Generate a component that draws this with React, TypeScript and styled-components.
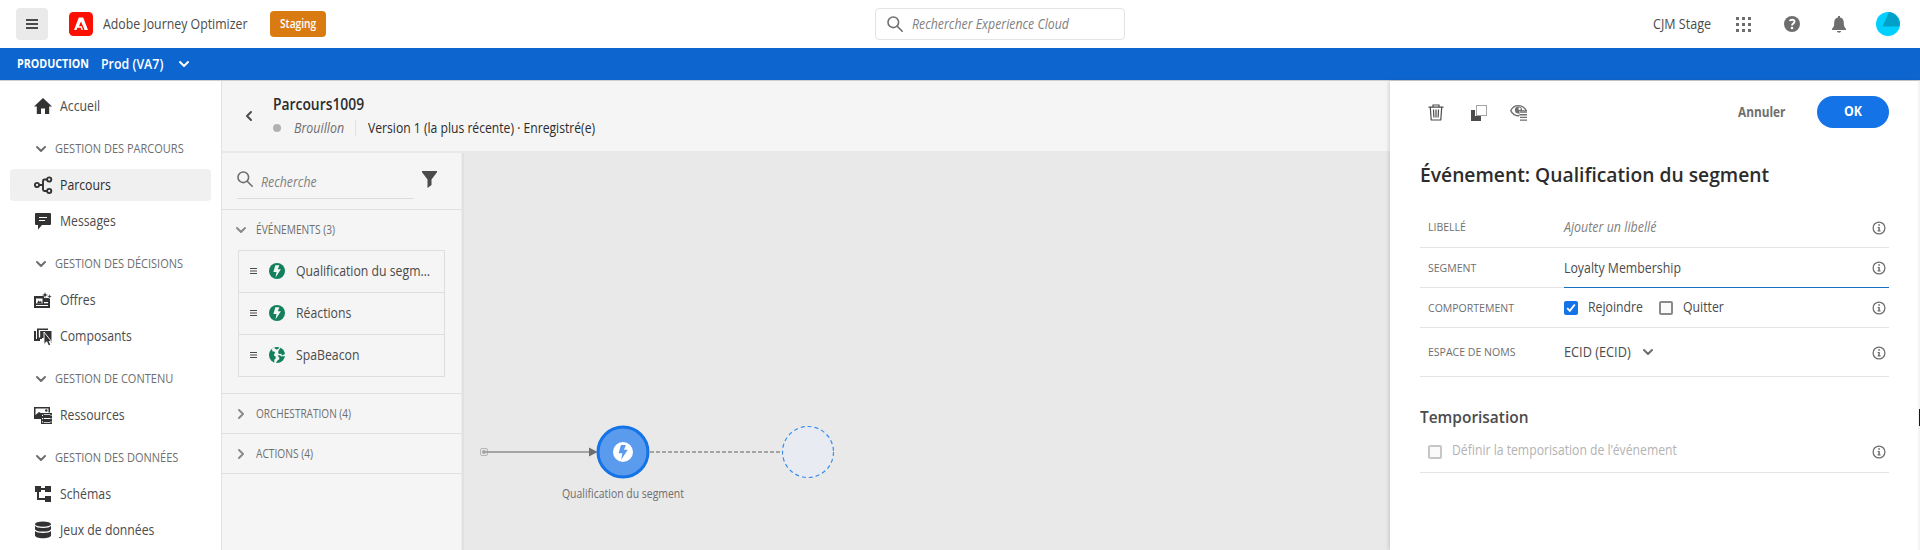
import React from 'react';
import styled, { createGlobalStyle, css } from 'styled-components';

const GlobalStyle = createGlobalStyle`
  *, *::before, *::after { box-sizing: border-box; }
  body { margin: 0; overflow: hidden; background: #fff; }
`;

const Page = styled.div`
  width: 1920px;
  height: 550px;
  display: flex;
  flex-direction: column;
  overflow: hidden;
  font-family: 'Open Sans', 'Noto Sans', sans-serif;
  font-size: 14px;
  line-height: 20px;
  color: #4b4b4b;
`;

/* Text is drawn slightly condensed; $fit is the horizontal ratio and $w the room it takes. */
const Text = styled.span<{ $w?: number; $fit?: number }>`
  display: block;
  flex: none;
  white-space: nowrap;
  width: ${p => (p.$w ? p.$w + 'px' : 'auto')};
  transform: scaleX(${p => p.$fit ?? 0.876});
  transform-origin: left center;
`;

const Svg = styled.svg`
  display: block;
  flex: none;
  overflow: visible;
`;

/* ---------- top bar ---------- */

const TopBar = styled.header`
  height: 48px;
  flex: none;
  display: flex;
  align-items: center;
  padding: 0 20px 0 16px;
  background: #fff;
`;
const MenuButton = styled.button`
  width: 32px;
  height: 32px;
  display: flex;
  align-items: center;
  justify-content: center;
  border: 0;
  padding: 0;
  border-radius: 4px;
  background: #eaeaea;
`;
const Brand = styled.div`
  display: flex;
  align-items: center;
  gap: 10px;
  width: 201px;
  margin-left: 21px;
`;
const StagingBadge = styled.div`
  width: 56px;
  height: 26px;
  padding-left: 10px;
  border-radius: 4px;
  background: #da7b11;
  color: #fff;
  font-size: 12px;
  font-weight: 600;
  line-height: 25px;
`;
const GlobalSearch = styled.div`
  width: 250px;
  height: 32px;
  margin-left: 549px;
  padding-left: 11px;
  display: flex;
  align-items: center;
  gap: 9px;
  border: 1px solid #e4e4e4;
  border-radius: 4px;
  color: #808080;
  font-style: italic;
`;
const TopActions = styled.div`
  flex: 1;
  display: flex;
  align-items: center;
  justify-content: flex-end;
`;
const ActionSlot = styled.div<{ $ml: number }>`
  margin-left: ${p => p.$ml}px;
`;

/* ---------- sandbox bar ---------- */

const SandboxBar = styled.div`
  height: 33px;
  flex: none;
  display: flex;
  align-items: center;
  padding-left: 17px;
  border-bottom: 1px solid #cfcfd3;
  background: #0d66d0;
  color: #fff;
`;
const EnvName = styled.div`
  width: 84px;
  font-size: 12px;
  font-weight: 700;
`;
const SandboxName = styled.div`
  width: 78px;
  font-weight: 600;
`;

/* ---------- navigation ---------- */

const Body = styled.div`
  flex: 1;
  min-height: 0;
  display: flex;
`;
const Nav = styled.nav`
  width: 222px;
  flex: none;
  padding: 9px 10px 0;
  border-right: 1px solid #e1e1e1;
  overflow: hidden;
  background: #fff;
`;
const NavItem = styled.a<{ $active?: boolean }>`
  height: 32px;
  margin-bottom: 4px;
  padding-left: 24px;
  display: flex;
  align-items: center;
  gap: 8px;
  border-radius: 4px;
  ${p => p.$active && css`background: #f0f0f0; color: #2c2c2c;`}
`;
const NavHeading = styled.div`
  height: 32px;
  margin: 11px 0 4px;
  padding-left: 26px;
  display: flex;
  align-items: center;
  gap: 9px;
  font-size: 12px;
  color: #6e6e6e;
`;

/* ---------- journey ---------- */

const Journey = styled.main`
  width: 1168px;
  flex: none;
  display: flex;
  flex-direction: column;
`;
const JourneyHeader = styled.div`
  height: 72px;
  flex: none;
  display: flex;
  padding-left: 22px;
  border-bottom: 2px solid #e9e9e9;
  background: #f5f5f5;
`;
const BackSlot = styled.div`
  width: 29px;
  padding-top: 30px;
`;
const JourneyName = styled.h1`
  margin: 13px 0 3px;
  font-size: 16px;
  font-weight: 600;
  line-height: 21px;
  color: #2c2c2c;
`;
const StatusLine = styled.div`
  display: flex;
  align-items: center;
`;
const StatusDot = styled.i`
  width: 8px;
  height: 8px;
  border-radius: 50%;
  background: #b1b1b1;
`;
const StatusName = styled.em`
  margin-left: 13px;
  width: 62px;
  height: 16px;
  line-height: 16px;
  border-right: 1px solid #e1e1e1;
  color: #6e6e6e;
`;
const VersionName = styled.div`
  margin-left: 12px;
  color: #2c2c2c;
`;
const Workspace = styled.div`
  flex: 1;
  display: flex;
`;

const Palette = styled.aside`
  width: 242px;
  flex: none;
  border-right: 2px solid #e1e1e1;
  box-shadow: inset -1px 0 #ebebeb;
  background: #f5f5f5;
`;
const PaletteSearch = styled.div`
  height: 57px;
  display: flex;
  padding-left: 15px;
  border-bottom: 1px solid #e1e1e1;
`;
const SearchField = styled.div`
  width: 177px;
  height: 46px;
  padding-top: 18px;
  display: flex;
  gap: 8px;
  border-bottom: 1px solid #dcdcdc;
  font-style: italic;
  color: #808080;
`;
const FieldText = styled.div`
  padding-top: 1px;
`;
const FilterSlot = styled.div`
  margin: 18px 0 0 8px;
`;
const Section = styled.section`
  border-bottom: 1px solid #e1e1e1;
`;
const SectionHead = styled.div<{ $h?: number }>`
  height: ${p => p.$h ?? 39}px;
  display: flex;
  align-items: center;
  padding-left: 14px;
  gap: 10px;
  font-size: 12px;
  color: #6e6e6e;
`;
const EventList = styled.ul`
  width: 207px;
  margin: 0 0 16px 16px;
  padding: 0;
  list-style: none;
  border: 1px solid #dedede;
  border-bottom: 0;
`;
const EventItem = styled.li`
  height: 42px;
  display: flex;
  align-items: center;
  padding: 0 0 1px 11px;
  border-bottom: 1px solid #dedede;
`;
const EventIconSlot = styled.div`
  margin: 0 11px 0 12px;
`;

const Canvas = styled.div`
  flex: 1;
  background: #e9e9e9;
`;

/* ---------- properties panel ---------- */

const Properties = styled.aside`
  position: relative;
  flex: 1;
  padding: 15px 29px 0 30px;
  border-right: 2px solid #f4f4f4;
  box-shadow: -1px 0 4px rgba(0, 0, 0, 0.16);
  background: #fff;
`;
const PanelToolbar = styled.div`
  height: 32px;
  display: flex;
  align-items: center;
`;
const ToolSlot = styled.div<{ $ml: number }>`
  margin-left: ${p => p.$ml}px;
`;
const CancelButton = styled.button`
  width: 79px;
  margin-left: auto;
  padding: 0;
  border: 0;
  background: none;
  text-align: left;
  font: 700 14px/20px 'Open Sans', 'Noto Sans', sans-serif;
  color: #6e6e6e;
`;
const OkButton = styled.button`
  width: 72px;
  height: 32px;
  padding: 0 0 2px 27px;
  border: 0;
  border-radius: 16px;
  background: #1473e6;
  text-align: left;
  font: 700 14px/20px 'Open Sans', 'Noto Sans', sans-serif;
  color: #fff;
`;
const PanelTitle = styled.h2`
  margin: 32px 0 17px;
  font-size: 20px;
  font-weight: 600;
  line-height: 30px;
  color: #2c2c2c;
`;
const FormRow = styled.div<{ $h: number }>`
  height: ${p => p.$h}px;
  display: flex;
  align-items: stretch;
  border-bottom: 1px solid #e4e4e4;
`;
const FieldLabel = styled.div`
  width: 144px;
  padding-left: 8px;
  display: flex;
  align-items: center;
  font-size: 11px;
  color: #6e6e6e;
`;
const FieldValue = styled.div<{ $active?: boolean; $muted?: boolean }>`
  flex: 1;
  display: flex;
  align-items: center;
  ${p => p.$muted && css`font-style: italic; color: #808080;`}
  ${p => p.$active && css`margin-bottom: -1px; border-bottom: 1px solid #1473c8;`}
`;
const InfoSlot = styled.div`
  width: 17px;
  margin-left: auto;
  padding-top: 1px;
`;
const Checkbox = styled.span<{ $checked?: boolean; $disabled?: boolean }>`
  width: 14px;
  height: 14px;
  display: flex;
  align-items: center;
  justify-content: center;
  margin-top: 1px;
  border-radius: 2px;
  border: 2px solid ${p => (p.$checked ? '#1473e6' : p.$disabled ? '#c6c6c6' : '#8a8a8a')};
  background: ${p => (p.$checked ? '#1473e6' : '#fafafa')};
`;
const CheckLabel = styled.div<{ $w?: number }>`
  margin-left: 10px;
  width: ${p => (p.$w ? p.$w + 'px' : 'auto')};
  padding-bottom: 2px;
`;
const SubTitle = styled.h3`
  margin: 28px 0 0;
  font-size: 16px;
  font-weight: 600;
  line-height: 24px;
  color: #4b4b4b;
`;
const TimeoutRow = styled.div`
  height: 44px;
  display: flex;
  align-items: center;
  padding: 1px 0 0 8px;
  border-bottom: 1px solid #e4e4e4;
  color: #b3b3b3;
`;
const EdgeHandle = styled.i`
  position: absolute;
  right: -2px;
  top: 328px;
  width: 1px;
  height: 17px;
  background: #17171f;
`;

/* ---------- icons ---------- */

const Chevron = ({ dir = 'down', color = '#6e6e6e' }: { dir?: 'down' | 'right' | 'left'; color?: string }) => {
  const d = { down: 'M1 2 5 6 9 2', right: 'M3 1 7 5 3 9', left: 'M7 1 3 5 7 9' }[dir];
  return (
    <Svg width="10" height={dir === 'down' ? 8 : 10} viewBox={dir === 'down' ? '0 0 10 8' : '0 0 10 10'}>
      <path d={d} fill="none" stroke={color} strokeWidth="2" strokeLinecap="round" strokeLinejoin="round" />
    </Svg>
  );
};

const SearchIcon = () => (
  <Svg width="16" height="16" viewBox="0 0 16 16" fill="none" stroke="#6e6e6e" strokeWidth="1.6" strokeLinecap="round">
    <circle cx="6.3" cy="6.3" r="5.3" />
    <path d="m10.2 10.2 5 5" />
  </Svg>
);

const AdobeLogo = () => (
  <Svg width="24" height="24" viewBox="0 0 24 24">
    <rect width="24" height="24" rx="4.5" fill="#fa0f00" />
    <path d="M9.8 5.600h4.400L19 18h-3.400L12 9.400l-2 4.900h2.700l1.300 3.700H5z" fill="#fff" />
    <path d="M8.400 15.800h3.300l.8 2.200h-5z" fill="#fa0f00" />
  </Svg>
);

const bolt = 'M7.3 3.2h4.1l-1.6 4h3.1L7.5 15.4l1-5.3H5.4z';

const BoltBadge = () => (
  <Svg width="16" height="16" viewBox="1 1 16 16">
    <circle cx="9" cy="9" r="8" fill="#12805c" />
    <path d={bolt} fill="#f5f5f5" />
  </Svg>
);

const GlobeIcon = () => (
  <Svg width="16" height="16" viewBox="0 0 16 16">
    <circle cx="8" cy="8" r="8" fill="#12805c" />
    <path
      d="M2.600 2 5.300.2 6 1.800 7.500 2.400 9.500 1.800 10.300 0 11.600.6 10 3 9 5.200 10 7 12.300 6.800 13 8.400 16 7 16 9 12.600 9.400 10.800 8.200 8.400 8.400 10.200 10.400 10.300 12.200 8.400 13.400 7 16 5.300 16 5.300 12.800 6.800 11.200 6.600 9.600 5 8.400 5.100 7 6.300 5.900 5.300 4.600 3.800 4.400z"
      fill="#f5f5f5"
    />
  </Svg>
);

const DragHandle = () => (
  <Svg width="7" height="6" viewBox="0 0 7 6">
    <path d="M0 .5h7M0 3h7M0 5.5h7" stroke="#4b4b4b" strokeWidth="1" />
  </Svg>
);

const InfoIcon = () => (
  <Svg width="14" height="14" viewBox="0 0 14 14">
    <circle cx="7" cy="7" r="5.9" fill="none" stroke="#6e6e6e" strokeWidth="1.3" />
    <path d="M6.2 3.3h1.700v1.500H6.200zM5.600 6h2.200v3.300h.8v1.100H5.600V9.300h.7V7.100h-.7z" fill="#6e6e6e" />
  </Svg>
);

const navIcons: Record<string, React.ReactNode> = {
  home: <path d="M9 1 0 9.6h2.8V17H7v-5.600h4V17h4.200V9.600H18z" />,
  journeys: (
    <g fill="none" stroke="#323232" strokeWidth="1.900">
      <circle cx="3" cy="9" r="2.100" />
      <circle cx="15.200" cy="3.500" r="2.100" />
      <circle cx="15.200" cy="15" r="2.100" />
      <path d="M5 9h4M13 3.500h-2.500Q9 3.500 9 5v8.500Q9 15 10.500 15H13" />
    </g>
  ),
  messages: (
    <>
      <path d="M2 1h14a1 1 0 0 1 1 1v10a1 1 0 0 1-1 1H8l-4 4.500V13H2a1 1 0 0 1-1-1V2a1 1 0 0 1 1-1z" />
      <path d="M5 5.500h8M5 8.500h6" stroke="#fff" strokeWidth="1.100" />
    </>
  ),
  offers: (
    <>
      <path d="M0 5h10v2h6v10H0z" />
      <path d="M2 7.500h6.500v5H2zM2 14h12v1H2zM10 11h4v1.200h-4z" fill="#fff" />
      <path d="m2.800 12.500 1.800-3 1.400 1.500 1-1.500 1 3z" />
      <path d="m11 .8.9 2.300 2.300.9-2.300.9L11 7.200l-.9-2.300L7.800 4l2.300-.9zM15.500 3l.7 1.800 1.800.7-1.800.7-.7 1.800-.7-1.800-1.800-.7 1.800-.7z" stroke="#fff" strokeWidth=".4" />
    </>
  ),
  components: (
    <>
      <path d="M0 4h2v8h4v2H0zM3 1.500h11V3H4.800v7.500H8V12H3z" />
      <path d="M6.200 4H17.500v12L15 13H10v-2H6.200z" />
      <path d="M10 5v12.500l2.800-2.900h4.800z" stroke="#fff" strokeWidth=".9" />
      <path d="m13.500 13.500 2 4.500" stroke="#323232" strokeWidth="1.600" />
    </>
  ),
  assets: (
    <>
      <path d="M0 1h16v5.500h-1.500v-4h-13V9L5 6l2.500 1.500V13H0z" />
      <circle cx="12.300" cy="4.500" r="1.200" />
      <path d="M7 7h11v11H7z" />
      <path d="M9.800 12h6.400v1.100H9.800zM9.800 8.200h6.400v.8H9.800zM9.800 16.200h6.400v.8H9.800z" fill="#fff" />
      <path d="M8 9.300h1M8 12.600h1M8 15.900h1M16.600 9.300h.9M16.600 12.600h.9M16.600 15.900h.9" stroke="#fff" strokeWidth="1.200" />
    </>
  ),
  schemas: (
    <>
      <path d="M1 1h6v6H1zM11 1h6v6h-6zM11 11h6v6h-6z" />
      <path d="M6 4h6M4 6v8h8" fill="none" stroke="#323232" strokeWidth="2" />
    </>
  ),
  datasets: (
    <>
      <ellipse cx="9" cy="3.200" rx="8" ry="2.600" />
      <path d="M1 4.800C2 6.500 5 7 9 7s7-.5 8-2.200v3.100c0 1.500-3.600 2.700-8 2.700S1 9.400 1 7.900z" />
      <path d="M1 10.100c1 1.300 4 1.800 8 1.800s7-.5 8-1.800v4.300c0 1.600-3.600 2.800-8 2.800s-8-1.200-8-2.800z" />
    </>
  ),
};

const NavIcon = ({ name }: { name: string }) => (
  <Svg width="18" height="18" viewBox="0 0 18 18" fill="#323232">{navIcons[name]}</Svg>
);

/* ---------- data ---------- */

const home = { icon: 'home', label: 'Accueil' };
const navGroups = [
  { title: 'GESTION DES PARCOURS', items: [{ icon: 'journeys', label: 'Parcours', active: true }, { icon: 'messages', label: 'Messages' }] },
  { title: 'GESTION DES DÉCISIONS', items: [{ icon: 'offers', label: 'Offres' }, { icon: 'components', label: 'Composants' }] },
  { title: 'GESTION DE CONTENU', items: [{ icon: 'assets', label: 'Ressources' }] },
  { title: 'GESTION DES DONNÉES', items: [{ icon: 'schemas', label: 'Schémas' }, { icon: 'datasets', label: 'Jeux de données' }] },
];
const events = [
  { label: 'Qualification du segm…', icon: <BoltBadge /> },
  { label: 'Réactions', icon: <BoltBadge /> },
  { label: 'SpaBeacon', icon: <GlobeIcon /> },
];

/* ---------- parts ---------- */

const Diagram = () => (
  <Svg width="926" height="397" viewBox="464 153 926 397">
    <rect x="480.500" y="448.500" width="7" height="7" rx="1.500" fill="none" stroke="#b5b5b5" />
    <circle cx="484" cy="452" r="2" fill="#a5a5a5" />
    <path d="M485 452H590" stroke="#a5a5a5" strokeWidth="2" />
    <path d="M589 447.500 597.500 452 589 456.500z" fill="#6e6e6e" />
    <circle cx="623" cy="452" r="25" fill="#5b9bed" stroke="#1473e6" strokeWidth="3" />
    <g transform="translate(612 441) scale(1.222)">
      <circle cx="9" cy="9" r="8.200" fill="#fff" />
      <path d={bolt} fill="#5b9bed" />
    </g>
    <path d="M650 452H782" stroke="#a5a5a5" strokeWidth="2" strokeDasharray="4 2" />
    <circle cx="808" cy="452" r="25.500" fill="#e8ecf2" stroke="#378ef0" strokeWidth="1.200" strokeDasharray="4 3" />
    <text x="562" y="498" fontSize="12" fill="#6e6e6e" textLength="122" lengthAdjust="spacingAndGlyphs">Qualification du segment</text>
  </Svg>
);

const Info = () => <InfoSlot><InfoIcon /></InfoSlot>;

export default function App() {
  return (
    <Page>
      <GlobalStyle />
      <TopBar>
        <MenuButton>
          <Svg width="12" height="10" viewBox="0 0 12 10"><path d="M0 1h12M0 5h12M0 9h12" stroke="#4b4b4b" strokeWidth="2" /></Svg>
        </MenuButton>
        <Brand><AdobeLogo /><Text $fit={0.88}>Adobe Journey Optimizer</Text></Brand>
        <StagingBadge><Text $fit={0.85}>Staging</Text></StagingBadge>
        <GlobalSearch><SearchIcon /><Text $fit={0.88}>Rechercher Experience Cloud</Text></GlobalSearch>
        <TopActions>
          <Text $w={58} $fit={0.896}>CJM Stage</Text>
          <ActionSlot $ml={25}>
            <Svg width="15" height="15" viewBox="0 0 15 15" fill="#6e6e6e">
              {[0, 6, 12].map(y => [0, 6, 12].map(x => <rect key={`${x}-${y}`} x={x} y={y} width="3" height="3" />))}
            </Svg>
          </ActionSlot>
          <ActionSlot $ml={33}>
            <Svg width="16" height="16" viewBox="0 0 16 16">
              <circle cx="8" cy="8" r="8" fill="#6e6e6e" />
              <path d="M5.800 5C6.200 3.500 10.500 3 10.500 5.600 10.500 7.600 8 7.400 8 9.600" fill="none" stroke="#fff" strokeWidth="1.900" />
              <circle cx="8" cy="12" r="1.300" fill="#fff" />
            </Svg>
          </ActionSlot>
          <ActionSlot $ml={32}>
            <Svg width="14" height="17" viewBox="0 0 14 17" fill="#6e6e6e">
              <path d="M6 0h2v1.500c2.600.5 3.800 2.300 3.800 5 0 3.800.7 5.100 2.200 6.300V14H0v-1.200c1.500-1.200 2.200-2.500 2.200-6.300 0-2.700 1.200-4.500 3.800-5zM5 15h4c0 2.300-4 2.300-4 0z" />
            </Svg>
          </ActionSlot>
          <ActionSlot $ml={30}>
            <Svg width="24" height="24" viewBox="0 0 24 24">
              <circle cx="12" cy="12" r="12" fill="#00d0ff" />
              <path d="M13 .1A12 12 0 0 1 23.600 14.500L6.500 14.500z" fill="#00a0c8" />
            </Svg>
          </ActionSlot>
        </TopActions>
      </TopBar>

      <SandboxBar>
        <EnvName><Text $fit={0.891}>PRODUCTION</Text></EnvName>
        <SandboxName><Text $fit={0.885}>Prod (VA7)</Text></SandboxName>
        <Chevron color="#fff" />
      </SandboxBar>

      <Body>
        <Nav>
          <NavItem><NavIcon name={home.icon} /><Text>{home.label}</Text></NavItem>
          {navGroups.map(g => (
            <React.Fragment key={g.title}>
              <NavHeading><Chevron /><Text $fit={0.917}>{g.title}</Text></NavHeading>
              {g.items.map(i => (
                <NavItem key={i.label} $active={'active' in i && i.active}>
                  <NavIcon name={i.icon} /><Text>{i.label}</Text>
                </NavItem>
              ))}
            </React.Fragment>
          ))}
        </Nav>

        <Journey>
          <JourneyHeader>
            <BackSlot><Chevron dir="left" color="#4b4b4b" /></BackSlot>
            <div>
              <JourneyName><Text $fit={0.866}>Parcours1009</Text></JourneyName>
              <StatusLine>
                <StatusDot />
                <StatusName><Text $w={50} $fit={0.887}>Brouillon</Text></StatusName>
                <VersionName><Text $fit={0.868}>Version 1 (la plus récente) · Enregistré(e)</Text></VersionName>
              </StatusLine>
            </div>
          </JourneyHeader>
          <Workspace>
            <Palette>
              <PaletteSearch>
                <SearchField><SearchIcon /><FieldText><Text $fit={0.88}>Recherche</Text></FieldText></SearchField>
                <FilterSlot>
                  <Svg width="16" height="17" viewBox="0 0 16 17"><path d="M0 0h15v1.200L9.500 8.500V14l-4 3V8.500L0 1.200z" fill="#4b4b4b" /></Svg>
                </FilterSlot>
              </PaletteSearch>
              <Section>
                <SectionHead $h={40}><Chevron color="#8a8a8a" /><Text $fit={0.85}>ÉVÉNEMENTS (3)</Text></SectionHead>
                <EventList>
                  {events.map(e => (
                    <EventItem key={e.label}>
                      <DragHandle />
                      <EventIconSlot>{e.icon}</EventIconSlot>
                      <Text>{e.label}</Text>
                    </EventItem>
                  ))}
                </EventList>
              </Section>
              <Section><SectionHead><Chevron dir="right" color="#8a8a8a" /><Text $fit={0.838}>ORCHESTRATION (4)</Text></SectionHead></Section>
              <Section><SectionHead><Chevron dir="right" color="#8a8a8a" /><Text $fit={0.85}>ACTIONS (4)</Text></SectionHead></Section>
            </Palette>
            <Canvas><Diagram /></Canvas>
          </Workspace>
        </Journey>

        <Properties>
          <PanelToolbar>
            <ToolSlot $ml={8}>
              <Svg width="16" height="17" viewBox="0 0 16 17" fill="none" stroke="#4b4b4b" strokeWidth="1.200">
                <path d="M.5 3.200h15M5 3V1h6v2M2.300 3.500l.9 12.500h9.600l.9-12.500M5.500 5.500l.4 8M8 5.500v8M10.500 5.500l-.4 8" />
              </Svg>
            </ToolSlot>
            <ToolSlot $ml={26}>
              <Svg width="17" height="17" viewBox="0 0 17 17">
                <path d="M1 6h4v6h6v5H1z" fill="#4b4b4b" />
                <rect x="6.500" y="1.500" width="10" height="10" fill="none" stroke="#4b4b4b" strokeDasharray="1 1" />
              </Svg>
            </ToolSlot>
            <ToolSlot $ml={23}>
              <Svg width="18" height="18" viewBox="0 0 18 18">
                <path d="M.8 7.500C4 1 12.500.8 16.500 8H9.500v4.500C5.500 13.500 2 11 .8 7.500z" fill="none" stroke="#6e6e6e" strokeWidth="1.400" />
                <circle cx="8.500" cy="7" r="3.600" fill="#6e6e6e" />
                <circle cx="9.600" cy="5.700" r="1.200" fill="#fff" />
                <path d="M9.500 8H18v10H9.500z" fill="#fff" />
                <path d="M10 9h7M10 11.700h7M10 14.400h7M10 17.100h7" stroke="#6e6e6e" strokeWidth="1.400" />
              </Svg>
            </ToolSlot>
            <CancelButton><Text $fit={0.845}>Annuler</Text></CancelButton>
            <OkButton><Text $fit={0.88}>OK</Text></OkButton>
          </PanelToolbar>

          <PanelTitle><Text $fit={0.963}>Événement: Qualification du segment</Text></PanelTitle>

          <FormRow $h={41}>
            <FieldLabel><Text $fit={0.957}>LIBELLÉ</Text></FieldLabel>
            <FieldValue $muted><Text $fit={0.888}>Ajouter un libellé</Text><Info /></FieldValue>
          </FormRow>
          <FormRow $h={40}>
            <FieldLabel><Text $fit={0.957}>SEGMENT</Text></FieldLabel>
            <FieldValue $active><Text $fit={0.882}>Loyalty Membership</Text><Info /></FieldValue>
          </FormRow>
          <FormRow $h={40}>
            <FieldLabel><Text $fit={0.957}>COMPORTEMENT</Text></FieldLabel>
            <FieldValue>
              <Checkbox $checked>
                <Svg width="10" height="10" viewBox="0 0 10 10"><path d="m1.200 5.200 2.600 2.600 5-6.300" fill="none" stroke="#fff" strokeWidth="1.900" /></Svg>
              </Checkbox>
              <CheckLabel $w={71}><Text>Rejoindre</Text></CheckLabel>
              <Checkbox />
              <CheckLabel><Text>Quitter</Text></CheckLabel>
              <Info />
            </FieldValue>
          </FormRow>
          <FormRow $h={49}>
            <FieldLabel><Text $fit={0.957}>ESPACE DE NOMS</Text></FieldLabel>
            <FieldValue><Text $w={79} $fit={0.91}>ECID (ECID)</Text><Chevron /><Info /></FieldValue>
          </FormRow>

          <SubTitle><Text $fit={0.965}>Temporisation</Text></SubTitle>
          <TimeoutRow>
            <Checkbox $disabled />
            <CheckLabel><Text $fit={0.872}>Définir la temporisation de l’événement</Text></CheckLabel>
            <Info />
          </TimeoutRow>
          <EdgeHandle />
        </Properties>
      </Body>
    </Page>
  );
}
